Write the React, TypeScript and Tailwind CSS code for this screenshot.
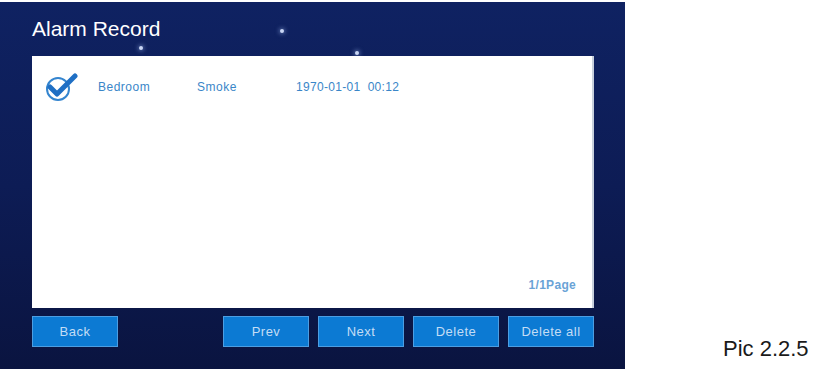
import React from "react";

const Check = () => (
    <svg width="34" height="30" viewBox="0 0 34 30" fill="none">
        <circle cx="14" cy="17" r="11" stroke="#3485cf" strokeWidth="2" />
        <path d="M6 15 L13 22 L31 4" stroke="#1f6fc4" strokeWidth="5" strokeLinecap="round" strokeLinejoin="round" />
    </svg>
);

const Star = () => (
    <span className="block w-[4px] h-[4px] rounded-full bg-[#c9d6f5] shadow-[0_0_4px_1px_rgba(160,185,240,0.5)]"></span>
);

const Btn = ({ label }: { label: string }) => (
    <div className="w-[86px] h-[31px] flex items-center justify-center bg-[#0c7ad3] border border-[#4c9ee2] text-[#c3ddf5] text-[13px] tracking-[0.5px]">
        {label}
    </div>
);

const App = () => {
    return (
        <div className="w-[836px] h-[372px] bg-white flex font-['Liberation_Sans',Arial,sans-serif]">
            <div className="relative w-[625px] h-[367px] mt-[2px] bg-gradient-to-b from-[#0f2262] via-[#0d1c55] to-[#0a1440] pl-[32px]">
                <div className="absolute left-[139px] top-[44px]"><Star /></div>
                <div className="absolute left-[280px] top-[27px]"><Star /></div>
                <div className="absolute left-[355px] top-[49px]"><Star /></div>

                <div className="h-[54px] pt-[15px] text-white text-[21px] leading-[24px]">Alarm Record</div>

                <div className="relative w-[562px] h-[252px] bg-white border-r-2 border-[#c8d0dc] pt-[16px]">
                    <div className="flex items-center h-[30px] pl-[12px] text-[12px] text-[#3a86c8] tracking-[0.5px]">
                        <Check />
                        <span className="ml-[20px] w-[99px]">Bedroom</span>
                        <span className="w-[99px]">Smoke</span>
                        <span className="tracking-[0.3px]">1970-01-01&nbsp;&nbsp;00:12</span>
                    </div>
                    <div className="absolute right-[16px] top-[220px] text-[12px] font-bold tracking-[0.3px] text-[#6aa3d6]">1/1Page</div>
                </div>

                <div className="flex mt-[8px] w-[562px]">
                    <Btn label="Back" />
                    <div className="flex gap-[9px] ml-auto">
                        <Btn label="Prev" />
                        <Btn label="Next" />
                        <Btn label="Delete" />
                        <Btn label="Delete all" />
                    </div>
                </div>
            </div>
            <div className="flex-1 pl-[98px] pt-[334px] text-[22px] text-[#1a1a1a] leading-[30px]">Pic 2.2.5</div>
        </div>
    );
};

export default App;
